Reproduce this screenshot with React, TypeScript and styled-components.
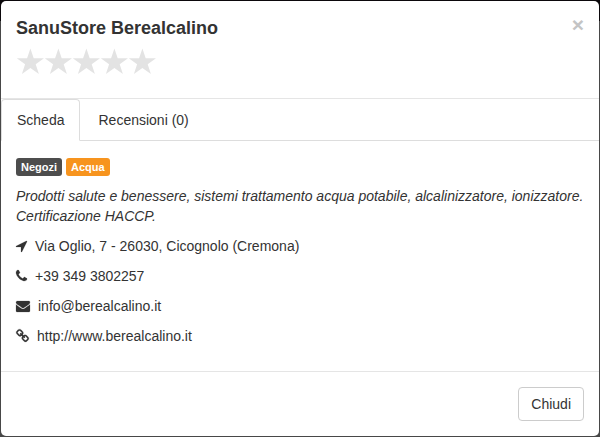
import React, { useState } from "react";
import styled, { createGlobalStyle } from "styled-components";

const GlobalStyle = createGlobalStyle`
  *, *::before, *::after { box-sizing: border-box; }
  body {
    margin: 0;
    background: linear-gradient(#0b080b 21px, #484848 21px);
    color: #333;
    font: 14px/20px "Liberation Sans", Arial, sans-serif;
  }
  button { font: inherit; color: inherit; cursor: pointer; }
`;

const Backdrop = styled.div`
  padding: 1px;
`;

const Dialog = styled.section`
  background: #fff;
  border-radius: 5px;
`;

const Header = styled.header`
  display: flex;
  justify-content: space-between;
  align-items: flex-start;
  padding: 15px 15px 24px;
  border-bottom: 1px solid #e5e5e5;
`;

const Title = styled.h1`
  margin: 0;
  font-size: 18px;
  line-height: 24px;
  font-weight: bold;
`;

const Rating = styled.div`
  display: flex;
  margin-top: 8px;
  color: #e3e3e3;
`;

const Star = styled.svg`
  display: block;
  width: 28px;
  height: 26px;
  fill: currentColor;
`;

const CloseButton = styled.button`
  && {
    padding: 0;
    border: 0;
    background: none;
    color: #c4c4c4;
    font-size: 21px;
    line-height: 18px;
    font-weight: bold;
  }
`;

const Tabs = styled.div`
  display: flex;
  gap: 2px;
  border-bottom: 1px solid #ddd;
`;

const Tab = styled.button<{ $active: boolean }>`
  margin-bottom: -1px;
  padding: 10px 15px;
  border: 1px solid transparent;
  border-color: ${({ $active }) => ($active ? "#ddd #ddd #fff" : "transparent transparent #ddd")};
  border-radius: 4px 4px 0 0;
  background: ${({ $active }) => ($active ? "#fff" : "transparent")};
`;

const Body = styled.div`
  display: flex;
  flex-direction: column;
  gap: 10px;
  padding: 15px 15px 25px;
`;

const Labels = styled.div`
  display: flex;
  gap: 4px;
  padding-top: 2px;
`;

const Label = styled.span<{ $color: string }>`
  padding: 0 5px;
  border-radius: 3px;
  background: ${({ $color }) => $color};
  color: #fff;
  font-size: 11px;
  line-height: 18px;
  font-weight: bold;
`;

const Description = styled.p`
  margin: 0;
  font-style: italic;
`;

const Contacts = styled.ul`
  display: flex;
  flex-direction: column;
  gap: 10px;
  margin: 0;
  padding: 0;
  list-style: none;
`;

const Contact = styled.li`
  display: flex;
  align-items: center;
  gap: 8px;
`;

const ContactIcon = styled.svg`
  height: 14px;
  overflow: visible;
  fill: currentColor;
  stroke: currentColor;
  stroke-width: 25;
`;

const ContactLink = styled.a`
  color: inherit;
  text-decoration: none;
`;

const Footer = styled.footer`
  display: flex;
  justify-content: flex-end;
  padding: 15px;
  border-top: 1px solid #e5e5e5;
`;

const Button = styled.button`
  padding: 6px 12px;
  border: 1px solid #ccc;
  border-radius: 4px;
  background: #fff;
`;

const icons = {
  arrow: {
    width: 11,
    viewBox: "192 0 1408 1792",
    path: "M1593 349l-640 1280q-17 35-57 35-5 0-15-2-22-5-35.5-22.5t-13.5-39.5v-576h-576q-22 0-39.5-13.5t-22.5-35.5 4-42 29-30l1280-640q13-7 29-7 27 0 45 19 15 14 18.5 34.5t-6.5 39.5z",
  },
  phone: {
    width: 11,
    viewBox: "192 0 1408 1792",
    path: "M1600 1240q0 27-10 70.5t-21 68.5q-21 50-122 106-94 51-186 51-27 0-53-3.5t-57.5-12.5-47-14.5-55.5-20.5-49-18q-98-35-175-83-127-79-264-216t-216-264q-48-77-83-175-3-9-18-49t-20.5-55.5-14.5-47-12.5-57.5-3.5-53q0-92 51-186 56-101 106-122 25-11 68.5-21t70.5-10q14 0 21 3 18 6 53 76 11 19 30 54t35 63.5 31 53.5q3 4 17.5 25t21.5 35.5 7 28.5q0 20-28.5 50t-62 55-62 53-28.5 46q0 9 5 22.5t8.5 20.5 14 24 11.5 19q76 137 174 235t235 174q2 1 19 11.5t24 14 20.5 8.5 22.5 5q18 0 46-28.5t53-62 55-62 50-28.5q14 0 28.5 7t35.5 21.5 25 17.5q25 15 53.5 31t63.5 35 54 30q70 35 76 53 3 7 3 21z",
  },
  envelope: {
    width: 14,
    viewBox: "0 0 1792 1792",
    path: "M1792 710v794q0 66-47 113t-113 47h-1472q-66 0-113-47t-47-113v-794q44 49 101 87 362 246 497 345 57 42 92.5 65.5t94.5 48 110 24.5h2q51 0 110-24.5t94.5-48 92.5-65.5q170-123 498-345 57-39 100-87zm0-294q0 79-49 151t-122 123q-376 261-468 325-10 7-42.5 31t-54 38.5-52 32.5-57.5 27-50 9h-2q-23 0-50-9t-57.5-27-52-32.5-54-38.5-42.5-31q-91-64-262-182.5t-205-142.5q-62-42-117-115.5t-55-136.5q0-78 41.5-130t118.5-52h1472q65 0 112.5 47t47.5 113z",
  },
  chain: {
    width: 13,
    viewBox: "64 0 1664 1792",
    path: "M1520 1216q0-40-28-68l-208-208q-28-28-68-28-42 0-72 32 3 3 19 18.5t21.5 21.5 15 19 13 25.5 3.5 27.5q0 40-28 68t-68 28q-15 0-27.5-3.5t-25.5-13-19-15-21.5-21.5-18.5-19q-33 31-33 73 0 40 28 68l206 207q27 27 68 27 40 0 68-26l147-146q28-28 28-67zm-703-705q0-40-28-68l-206-207q-28-28-68-28-39 0-68 27l-147 146q-28 28-28 67 0 40 28 68l208 208q27 27 68 27 42 0 72-31-3-3-19-18.5t-21.5-21.5-15-19-13-25.5-3.5-27.5q0-40 28-68t68-28q15 0 27.5 3.5t25.5 13 19 15 21.5 21.5 18.5 19q33-31 33-73zm895 705q0 120-85 203l-147 146q-83 83-203 83-121 0-204-85l-206-207q-83-83-83-203 0-123 88-209l-88-88q-86 88-208 88-120 0-204-84l-208-208q-84-84-84-204t85-203l147-146q83-83 203-83 121 0 204 85l206 207q83 83 83 203 0 123-88 209l88 88q86-88 208-88 120 0 204 84l208 208q84 84 84 204z",
  },
};

function Icon({ name }: { name: keyof typeof icons }) {
  const { width, viewBox, path } = icons[name];
  return (
    <ContactIcon width={width} viewBox={viewBox} aria-hidden="true">
      <path d={path} />
    </ContactIcon>
  );
}

export default function App() {
  const [tab, setTab] = useState<"scheda" | "recensioni">("scheda");

  return (
    <>
      <GlobalStyle />
      <Backdrop>
        <Dialog role="dialog" aria-labelledby="store-title">
          <Header>
            <div>
              <Title id="store-title">SanuStore Berealcalino</Title>
              <Rating role="img" aria-label="0 / 5">
                {[1, 2, 3, 4, 5].map((n) => (
                  <Star key={n} viewBox="0 0 28 26">
                    <path d="M14.4 0.6L17.7 10.3H28L19.7 16.3L22.9 26L14.4 20L5.9 26L9.1 16.3L0.8 10.3H11.1Z" />
                  </Star>
                ))}
              </Rating>
            </div>
            <CloseButton type="button" aria-label="Chiudi finestra">×</CloseButton>
          </Header>
          <Tabs role="tablist">
            <Tab type="button" role="tab" aria-selected={tab === "scheda"} $active={tab === "scheda"} onClick={() => setTab("scheda")}>
              Scheda
            </Tab>
            <Tab type="button" role="tab" aria-selected={tab === "recensioni"} $active={tab === "recensioni"} onClick={() => setTab("recensioni")}>
              Recensioni (0)
            </Tab>
          </Tabs>
          <Body role="tabpanel">
            {tab === "scheda" && (
              <>
                <Labels>
                  <Label $color="#4d4d4d">Negozi</Label>
                  <Label $color="#f7941e">Acqua</Label>
                </Labels>
                <Description>
                  Prodotti salute e benessere, sistemi trattamento acqua potabile, alcalinizzatore, ionizzatore. Certificazione HACCP.
                </Description>
                <Contacts>
                  <Contact><Icon name="arrow" />Via Oglio, 7 - 26030, Cicognolo (Cremona)</Contact>
                  <Contact><Icon name="phone" />+39 349 3802257</Contact>
                  <Contact>
                    <Icon name="envelope" />
                    <ContactLink href="mailto:info@berealcalino.it">info@berealcalino.it</ContactLink>
                  </Contact>
                  <Contact>
                    <Icon name="chain" />
                    <ContactLink href="http://www.berealcalino.it">http://www.berealcalino.it</ContactLink>
                  </Contact>
                </Contacts>
              </>
            )}
          </Body>
          <Footer>
            <Button type="button">Chiudi</Button>
          </Footer>
        </Dialog>
      </Backdrop>
    </>
  );
}
